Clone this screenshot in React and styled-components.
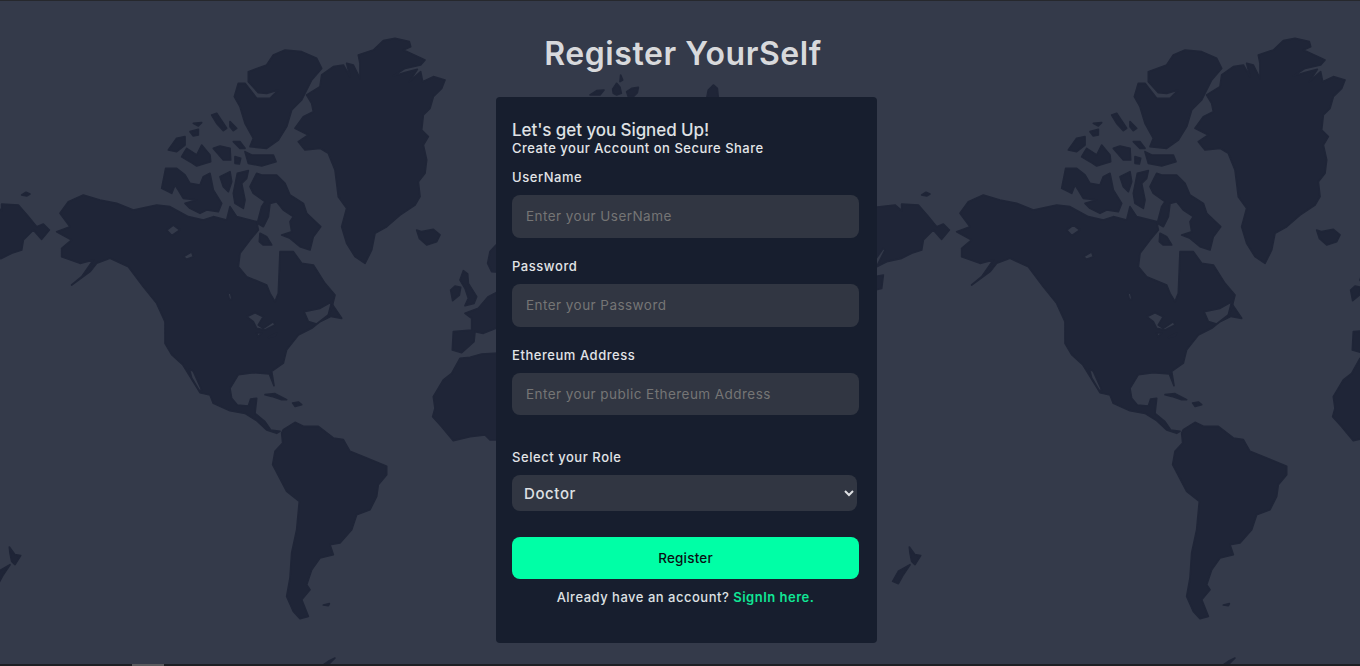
import React from 'react';
import styled, { createGlobalStyle } from 'styled-components';

const FONT = `Inter, "Noto Sans", "Liberation Sans", sans-serif`;

const GlobalStyle = createGlobalStyle`
    html, body {
        margin: 0;
        padding: 0;
        background-color: #1d1f24;
    }
    * {
        box-sizing: border-box;
    }
`;

const Page = styled.div`
    position: relative;
    height: 666px;
    overflow: hidden;
    display: flex;
    flex-direction: column;
    align-items: center;
    padding: 35px 0 0 13px;
    background-color: #343a4a;
    font-family: ${FONT};
`;

const MapLayer = styled.svg`
    position: absolute;
    top: 0;
    left: 0;
    width: 1360px;
    height: 666px;
`;

const TopEdge = styled.div`
    position: absolute;
    top: 0;
    left: 0;
    right: 0;
    height: 1px;
    background-color: #26282d;
`;

const BottomEdge = styled.div`
    position: absolute;
    bottom: 0;
    left: 0;
    right: 0;
    height: 2px;
    background-color: #1d1f24;
`;

const ScrollThumb = styled.div`
    width: 32px;
    height: 2px;
    margin-left: 132px;
    background-color: #5a5b5e;
`;

const Title = styled.h1`
    position: relative;
    margin: 0 7px 0 0;
    font-size: 32px;
    line-height: 38px;
    font-weight: 600;
    letter-spacing: 0.55px;
    color: #d8d9dc;
`;

const Card = styled.form`
    position: relative;
    width: 381px;
    height: 546px;
    margin-top: 24px;
    padding: 24px 18px 0 16px;
    background-color: #171e2e;
    border-radius: 4px;
`;

const Heading = styled.div`
    font-size: 17px;
    line-height: 19px;
    font-weight: 500;
    letter-spacing: -0.08px;
    color: #dfe1e4;
`;

const SubHeading = styled.div`
    font-size: 13px;
    line-height: 16px;
    font-weight: 500;
    letter-spacing: 0.5px;
    color: #e4e6e9;
`;

const Field = styled.div`
    margin-top: ${props => props.$top || 0}px;
`;

const Label = styled.label`
    display: block;
    height: 18px;
    margin-bottom: 9px;
    font-size: 13px;
    line-height: 18px;
    font-weight: 500;
    letter-spacing: 0.55px;
    color: #e2e4e7;
`;

const TextInput = styled.input`
    display: block;
    width: 347px;
    height: ${props => props.$height || 43}px;
    padding: 0 14px 1px;
    border: none;
    outline: none;
    border-radius: 8px;
    background-color: #313642;
    font-family: ${FONT};
    font-size: 13.5px;
    letter-spacing: 0.45px;
    color: #e2e4e7;

    ::placeholder {
        color: #6f7278;
        opacity: 1;
    }
`;

const RoleSelect = styled.select`
    display: block;
    width: 345px;
    height: 36px;
    padding: 0 8px;
    border: none;
    outline: none;
    border-radius: 8px;
    background-color: #313642;
    font-family: ${FONT};
    font-size: 15px;
    font-weight: 500;
    letter-spacing: 0.6px;
    color: #dfe1e4;
`;

const SubmitButton = styled.button`
    display: block;
    width: 347px;
    height: 42px;
    margin-top: 26px;
    border: none;
    border-radius: 8px;
    background-color: #00ffa6;
    font-family: ${FONT};
    font-size: 13.5px;
    font-weight: 500;
    letter-spacing: 0.2px;
    color: #0a0f14;
`;

const Footer = styled.p`
    width: 347px;
    margin: 9px 0 0;
    text-align: center;
    font-size: 13px;
    line-height: 18px;
    font-weight: 500;
    letter-spacing: 0.5px;
    color: #dfe1e4;
`;

const SignIn = styled.a`
    color: #10e796;
    font-weight: 600;
    text-decoration: none;
`;

// coordinates are 3x page pixels; the map repeats every 2700 units (900px)
const AMERICA = `M180,640 L205,605 L250,585 L300,600 L350,610 L400,630 L470,615 L510,620 L565,650 L610,660 L640,650 L680,660 L690,620 L710,650 L770,665 L775,690 L750,720 L720,760 L715,800 L740,830 L800,855 L810,880 L825,905 L835,880 L840,755 L880,755 L905,790 L940,795 L975,850 L1005,885 L1000,905 L990,950 L960,965 L935,985 L895,1005 L860,1049 L850,1089 L815,1114 L822,1157 L808,1122 L760,1118 L715,1124 L690,1165 L695,1195 L712,1215 L745,1218 L752,1197 L770,1195 L765,1240 L795,1265 L812,1290 L840,1294 L830,1300 L800,1290 L770,1262 L735,1240 L690,1232 L640,1210 L630,1185 L600,1178 L548,1094 L515,1064 L495,1030 L495,965 L470,910 L430,860 L385,800 L330,775 L290,790 L270,815 L215,855 L245,830 L280,780 L240,790 L185,770 L185,745 L215,720 L170,695 L210,680 Z
M500,690 L520,675 L540,690 L515,707 Z M550,770 L575,755 L580,770 L560,778 Z M683,878 L692,880 L696,898 L688,898 Z
M912,935 L960,925 L995,905 L985,945 L950,972 L925,965 Z
M740,950 L765,938 L790,950 L775,975 L790,985 L820,965 L825,975 L795,990 L770,985 L760,965 Z
M770,999 L785,999 L775,1010 Z M805,1012 L830,999 L825,1008 Z
M568,1107 L580,1114 L605,1170 L598,1172 L575,1134 Z`;

const LANDS = [
    // Greenland
    'M1120,150 L1150,122 L1185,115 L1228,125 L1232,140 L1210,150 L1275,180 L1262,195 L1215,205 L1180,228 L1215,218 L1252,208 L1228,245 L1262,215 L1268,245 L1300,230 L1335,240 L1325,265 L1300,290 L1290,325 L1270,345 L1265,390 L1285,410 L1270,435 L1280,480 L1275,520 L1255,545 L1260,590 L1245,615 L1200,645 L1160,680 L1125,700 L1115,750 L1095,790 L1065,770 L1040,730 L1025,680 L1040,625 L1015,590 L1005,510 L985,460 L960,445 L915,450 L895,425 L925,405 L885,385 L910,350 L940,335 L935,310 L920,285 L960,260 L965,225 L1000,200 L1030,195 L1050,230 L1040,190 L1060,195 L1080,235 L1080,190 L1075,165 Z',
    // Ellesmere
    'M855,150 L905,155 L950,175 L965,205 L935,240 L905,300 L875,330 L860,380 L835,420 L800,445 L750,440 L760,415 L735,370 L720,320 L703,290 L715,250 L735,250 L770,295 L810,295 L835,270 L800,280 L775,278 L745,245 L745,215 L800,195 L820,165 Z',
    // Arctic islands
    'M505,450 L530,415 L555,410 L555,435 L530,455 Z',
    'M635,345 L650,340 L680,385 L670,392 L650,370 Z',
    'M690,365 L710,385 L700,392 L690,380 Z',
    'M580,370 L605,368 L595,378 Z',
    'M570,395 L595,388 L595,405 L580,408 Z',
    'M545,470 L560,445 L590,465 L605,435 L630,465 L632,485 L590,498 L570,485 Z',
    'M640,445 L660,438 L690,445 L692,480 L670,480 Z',
    'M700,425 L720,425 L735,445 L720,445 Z',
    'M705,470 L722,475 L718,492 L705,490 Z',
    'M735,455 L755,465 L820,465 L828,485 L785,498 L745,490 Z',
    'M497,505 L530,505 L555,525 L570,550 L600,555 L610,530 L630,520 L640,570 L665,610 L655,635 L620,630 L600,640 L570,625 L555,610 L590,600 L550,595 L535,570 L525,555 L515,580 L485,565 Z',
    'M660,530 L690,515 L695,545 L685,575 L670,560 Z',
    'M712,520 L745,512 L740,535 L725,550 L735,600 L730,625 L705,610 L700,580 Z',
    'M770,520 L785,525 L830,525 L855,550 L870,585 L910,610 L920,640 L962,680 L940,710 L930,750 L900,740 L870,715 L845,705 L875,695 L870,665 L880,650 L850,630 L830,605 L810,610 L805,650 L790,680 L772,670 L785,620 L795,605 L760,580 L750,560 Z',
    'M780,700 L800,710 L815,735 L790,735 L778,725 Z',
    // Newfoundland
    'M998,915 L1025,955 L985,948 Z',
    // Wrangel
    'M65,585 L78,577 L90,582 L80,588 Z',
    // Iceland
    'M1250,690 L1265,695 L1300,688 L1320,705 L1310,725 L1280,735 L1258,715 Z',
    // Caribbean
    'M795,1184 L825,1181 L860,1199 L845,1199 L815,1189 Z',
    'M878,1209 L895,1206 L905,1214 L885,1219 Z',
    // South America
    'M845,1299 L850,1289 L885,1267 L910,1279 L955,1279 L1000,1314 L1030,1319 L1050,1354 L1100,1374 L1160,1399 L1160,1424 L1135,1454 L1130,1489 L1110,1529 L1070,1544 L1055,1589 L1020,1629 L990,1634 L1000,1664 L960,1674 L935,1709 L920,1754 L930,1769 L905,1799 L925,1849 L900,1856 L880,1834 L860,1789 L870,1734 L875,1659 L890,1589 L898,1504 L860,1474 L818,1394 L825,1354 L848,1329 Z',
    'M970,1815 L988,1811 L985,1817 Z',
    // Antarctic tip
    'M965,1998 L985,1984 L1005,1974 L990,1989 L985,1994 Z',
    // New Zealand
    'M28,1641 L45,1664 L62,1667 L45,1694 L35,1684 L30,1659 Z',
    'M30,1694 L10,1724 L-5,1751 L-22,1744 L-5,1714 Z',
    // Far east Russia
    'M-75,622 L-15,615 L5,632 L5,612 L55,615 L85,650 L110,680 L130,672 L148,690 L125,718 L100,690 L70,720 L65,750 L35,760 L5,775 L-40,785 L-70,800 L-45,750 L-50,745 L-75,780 Z',
    'M-75,830 L-50,825 L-55,865 L-75,870 Z',
    // Europe
    'M1488,735 L1470,755 L1463,790 L1475,815 L1520,818 L1520,735 Z',
    'M1352,870 L1365,858 L1382,862 L1378,885 L1358,902 Z',
    'M1390,812 L1403,822 L1405,850 L1430,890 L1422,910 L1395,917 L1405,895 L1395,865 L1380,840 Z',
    'M1488,878 L1465,890 L1435,925 L1395,940 L1415,955 L1415,990 L1360,995 L1357,1050 L1385,1058 L1422,1025 L1425,995 L1450,1000 L1488,985 L1520,985 L1520,878 Z',
    // Africa
    'M1520,1058 L1445,1062 L1410,1072 L1380,1075 L1355,1120 L1330,1140 L1300,1190 L1305,1225 L1298,1250 L1325,1280 L1360,1322 L1410,1310 L1455,1305 L1470,1320 L1520,1320 Z',
    // Above the card
    'M2120,295 L2125,270 L2140,255 L2152,265 L2155,295 Z',
    'M1840,280 L1838,268 L1850,250 L1860,262 L1864,280 L1850,285 Z',
    'M1862,225 L1868,240 L1860,245 Z',
    'M1880,275 L1895,265 L1915,262 L1912,278 L1900,290 L1885,290 Z',
    'M1770,285 L1790,272 L1812,270 L1800,285 Z',
];

const WorldMap = () => (
    <MapLayer viewBox="0 0 4080 1998" aria-hidden="true">
        <defs>
            <g id="world" fill="#1f2537" stroke="#1f2537" strokeWidth="5" strokeLinejoin="round">
                <path d={AMERICA} fillRule="evenodd" />
                {LANDS.map((d, i) => <path key={i} d={d} />)}
            </g>
        </defs>
        <use href="#world" />
        <use href="#world" x="2700" />
    </MapLayer>
);

const FormField = ({ label, placeholder, top, height }) => (
    <Field $top={top}>
        <Label>{label}</Label>
        <TextInput placeholder={placeholder} $height={height} />
    </Field>
);

export default function App() {
    return (
        <>
            <GlobalStyle />
            <Page>
                <WorldMap />
                <TopEdge />
                <BottomEdge>
                    <ScrollThumb />
                </BottomEdge>
                <Title>Register YourSelf</Title>
                <Card onSubmit={e => e.preventDefault()}>
                    <Heading>Let's get you Signed Up!</Heading>
                    <SubHeading>Create your Account on Secure Share</SubHeading>
                    <FormField top={12} label="UserName" placeholder="Enter your UserName" />
                    <FormField top={19} label="Password" placeholder="Enter your Password" />
                    <FormField top={19} label="Ethereum Address" placeholder="Enter your public Ethereum Address" height={42} />
                    <Field $top={33}>
                        <Label>Select your Role</Label>
                        <RoleSelect defaultValue="Doctor">
                            <option>Doctor</option>
                            <option>Patient</option>
                        </RoleSelect>
                    </Field>
                    <SubmitButton type="submit">Register</SubmitButton>
                    <Footer>
                        Already have an account? <SignIn href="#signin">SignIn here.</SignIn>
                    </Footer>
                </Card>
            </Page>
        </>
    );
}
